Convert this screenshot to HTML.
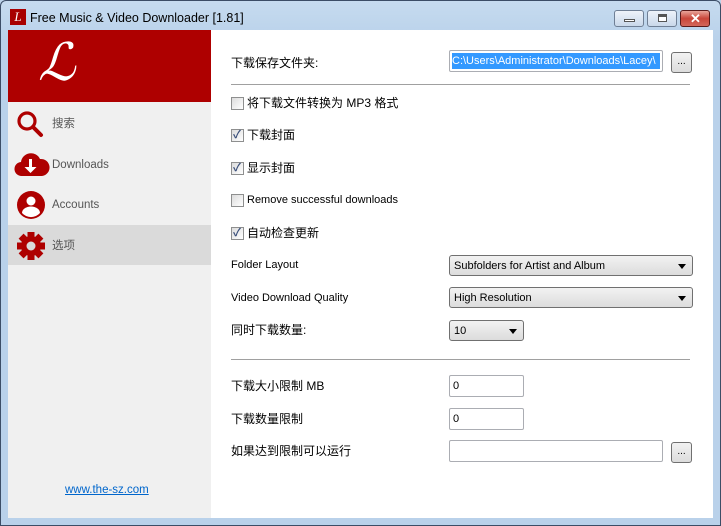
<!DOCTYPE html>
<html><head><meta charset="utf-8"><style>
*{box-sizing:border-box;margin:0;padding:0}
body{width:721px;height:526px;overflow:hidden;font-family:"Liberation Sans","Noto Sans CJK SC",sans-serif;font-size:12px;line-height:16px;color:#000;position:relative;background:#bcd3ea}
.frame{position:absolute;left:0;top:0;width:721px;height:526px;border:1px solid #3c4d66;border-radius:6px 6px 0 0;background:linear-gradient(#c6dbef,#b9d1ea 40px)}
.title{position:absolute;left:30px;top:10px;font-size:12.5px;color:#000}
.ico{position:absolute;left:10px;top:9px;width:16px;height:16px;background:#a80000;color:#fff;font:italic 13px "Liberation Serif",serif;text-align:center;line-height:16px}
.btn{position:absolute;top:10px;height:17px;border:1px solid #6f7f95;border-radius:3px;background:linear-gradient(#eef3fa,#c9d8ea)}
.client{position:absolute;left:8px;top:30px;width:705px;height:488px;background:#fff}
.side{position:absolute;left:0;top:0;width:203px;height:488px;background:#f0f0f0}
.logo{height:72px;background:#ae0000;color:#fff;font:italic 52px/60px "Liberation Serif",serif;padding:4px 0 0 30px}
.nav{position:absolute;left:0;width:203px;height:40px;color:#555;font-size:11.5px}
.nav span{position:absolute;left:44px;top:13px}
.nav svg{position:absolute;left:6px;top:5px}
.lbl{position:absolute;left:223px;font-size:11px}
.cb{position:absolute;left:223px;font-size:11px;padding-left:16px}
.cb:before{content:"";position:absolute;left:0;top:2px;width:11px;height:11px;border:1px solid #8e8f8f;background:linear-gradient(135deg,#dcdcdc,#fff)}
.cb.c:after{content:"✓";position:absolute;left:2px;top:0;color:#3a4f7a;font-size:11px;font-weight:bold}
.hr{position:absolute;left:223px;width:459px;height:1px;background:#a0a0a0}
.in{position:absolute;height:22px;border:1px solid #abadb3;border-radius:2px;background:#fff;padding:2px 3px;font-size:11px}
.sel{position:absolute;height:21px;border:1px solid #707070;border-radius:3px;background:linear-gradient(#f2f2f2,#dcdcdc);padding:2px 4px;font-size:11px}
.sel:after{content:"";position:absolute;right:6px;top:8px;border:4px solid transparent;border-top:5px solid #000}
.dots{position:absolute;width:21px;height:21px;border:1px solid #707070;border-radius:3px;background:linear-gradient(#f2f2f2,#dcdcdc);text-align:center;font-size:10px;line-height:18px}
</style></head><body>
<div class="frame"></div>
<div class="ico">L</div>
<div class="title">Free Music &amp; Video Downloader [1.81]</div>
<div class="btn" style="left:614px;width:30px"><div style="position:absolute;left:9px;top:8px;width:11px;height:3px;background:#fff;border:1px solid #555"></div></div>
<div class="btn" style="left:647px;width:30px"><div style="position:absolute;left:10px;top:3px;width:9px;height:8px;border:1px solid #555;border-top-width:3px;background:#fff"></div></div>
<div class="btn" style="left:680px;width:30px;border-color:#5a1a1a;background:linear-gradient(#e8a59a,#c9463a 50%,#d3675b)"><div style="position:absolute;left:9px;top:0;color:#fff;font-weight:bold;font-size:13px">✕</div></div>
<div class="client">
 <div class="side">
  <div class="logo">ℒ</div>
  <div class="nav" style="top:73px"><svg width="32" height="32" viewBox="0 0 32 32"><circle cx="13" cy="13" r="8" fill="none" stroke="#ae0000" stroke-width="3.2"/><path d="M19 19l8 8" stroke="#ae0000" stroke-width="4" stroke-linecap="round"/></svg><span>搜索</span></div>
  <div class="nav" style="top:114px"><svg width="36" height="32" viewBox="0 0 36 32"><path d="M8 27a7 7 0 0 1-1-14a10 10 0 0 1 19-3a8.5 8.5 0 0 1 2 17z" fill="#ae0000"/><path d="M15 10v8h-4.5l6 6l6-6h-4.5v-8z" fill="#fff"/></svg><span>Downloads</span></div>
  <div class="nav" style="top:154px"><svg width="32" height="32" viewBox="0 0 32 32"><circle cx="17" cy="16" r="14" fill="#ae0000"/><circle cx="17" cy="12" r="4.5" fill="#fff"/><path d="M8 24a9 6.5 0 0 1 18 0a12 12 0 0 1-18 0z" fill="#fff"/></svg><span>Accounts</span></div>
  <div class="nav" style="top:195px;background:#dadada"><svg width="32" height="32" viewBox="0 0 32 32"><g fill="#ae0000" transform="translate(17 16)"><circle r="10"/><rect x="-3.5" y="-14" width="7" height="28"/><rect x="-3.5" y="-14" width="7" height="28" transform="rotate(45)"/><rect x="-3.5" y="-14" width="7" height="28" transform="rotate(90)"/><rect x="-3.5" y="-14" width="7" height="28" transform="rotate(135)"/><circle r="4.5" fill="#dadada"/></g></svg><span>选项</span></div>
  <div style="position:absolute;left:57px;top:452px;color:#0066cc;text-decoration:underline;font-size:11.5px">www.the-sz.com</div>
 </div>
 <div class="lbl" style="top:25px;font-size:12px">下载保存文件夹:</div>
 <div class="in" style="left:441px;top:20px;width:214px;padding:2px"><span style="background:#3399ff;color:#fff;white-space:nowrap;display:block;overflow:hidden;font-size:11px">C:\Users\Administrator\Downloads\Lacey\</span></div>
 <div class="dots" style="left:663px;top:22px">...</div>
 <div class="hr" style="top:54px"></div>
 <div class="cb" style="top:65px;font-size:12px">将下载文件转换为 MP3 格式</div>
 <div class="cb c" style="top:97px;font-size:12px">下载封面</div>
 <div class="cb c" style="top:130px;font-size:12px">显示封面</div>
 <div class="cb" style="top:162px">Remove successful downloads</div>
 <div class="cb c" style="top:195px;font-size:12px">自动检查更新</div>
 <div class="lbl" style="top:227px">Folder Layout</div>
 <div class="sel" style="left:441px;top:225px;width:244px">Subfolders for Artist and Album</div>
 <div class="lbl" style="top:260px">Video Download Quality</div>
 <div class="sel" style="left:441px;top:257px;width:244px">High Resolution</div>
 <div class="lbl" style="top:292px;font-size:12px">同时下载数量:</div>
 <div class="sel" style="left:441px;top:290px;width:75px">10</div>
 <div class="hr" style="top:329px"></div>
 <div class="lbl" style="top:348px;font-size:12px">下载大小限制 MB</div>
 <div class="in" style="left:441px;top:345px;width:75px">0</div>
 <div class="lbl" style="top:381px;font-size:12px">下载数量限制</div>
 <div class="in" style="left:441px;top:378px;width:75px">0</div>
 <div class="lbl" style="top:413px;font-size:12px">如果达到限制可以运行</div>
 <div class="in" style="left:441px;top:410px;width:214px"></div>
 <div class="dots" style="left:663px;top:412px">...</div>
</div>
</body></html>
